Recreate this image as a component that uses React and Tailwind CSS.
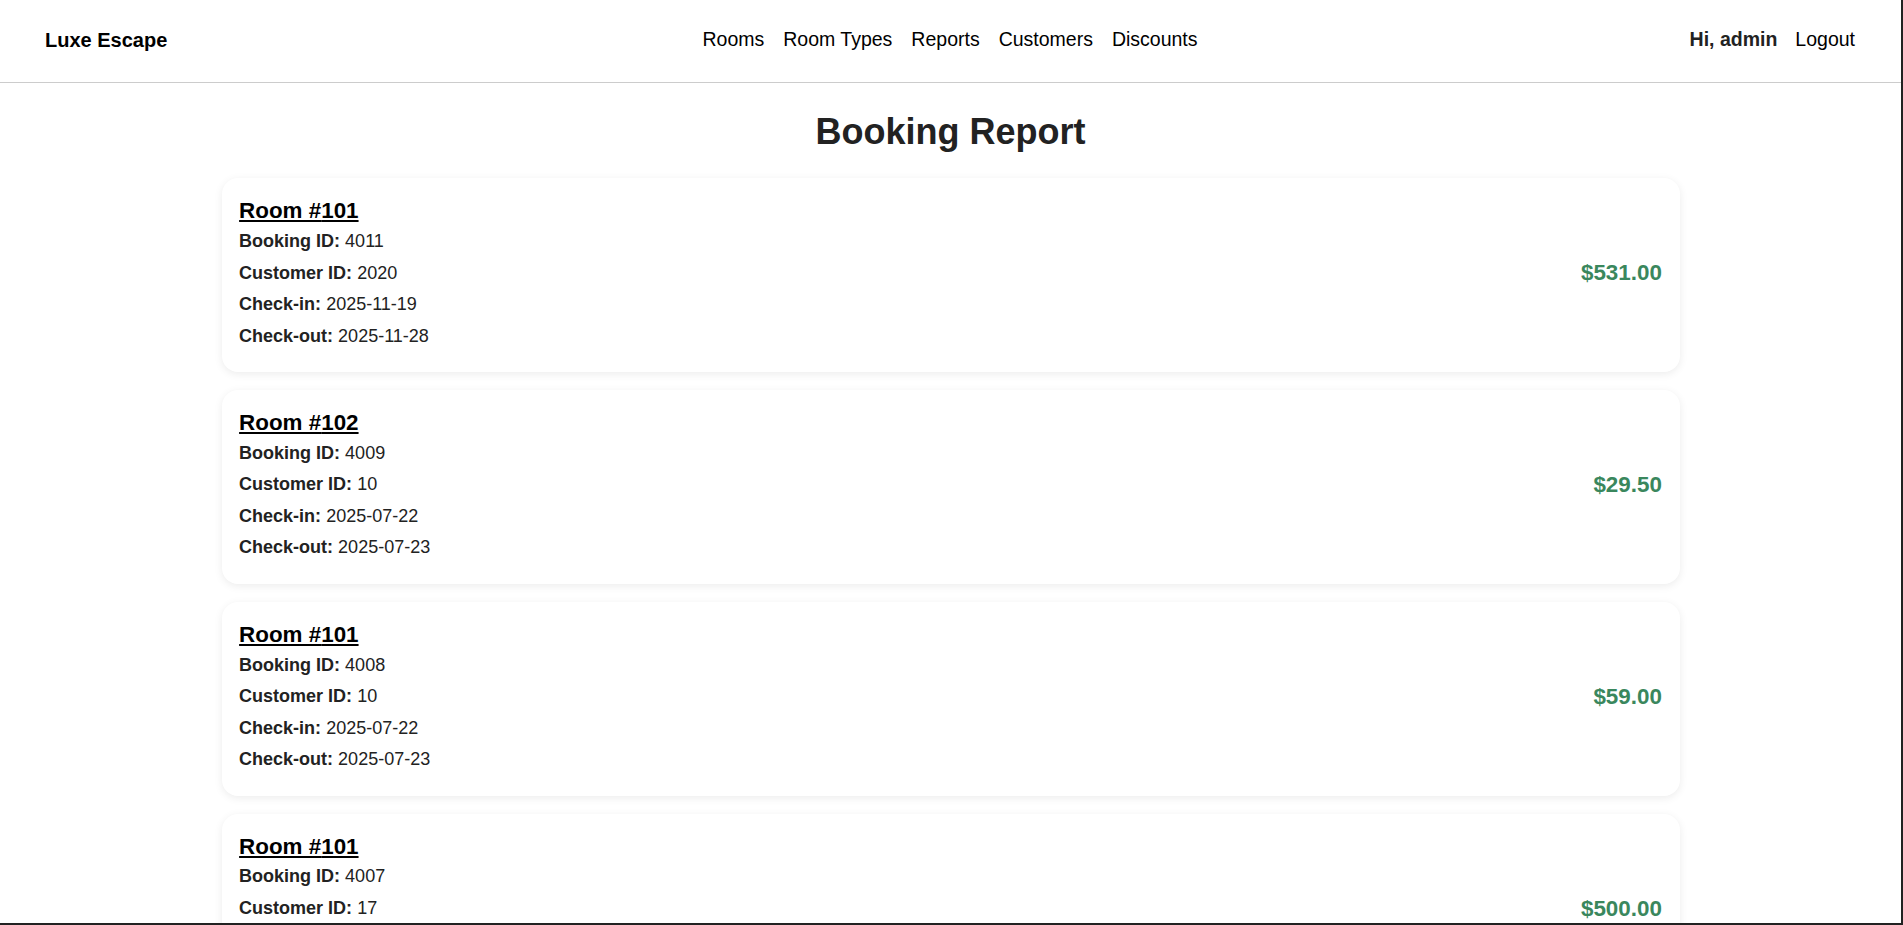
import React from "react";

const bookings = [
  { room: "101", id: "4011", customer: "2020", checkIn: "2025-11-19", checkOut: "2025-11-28", total: "$531.00" },
  { room: "102", id: "4009", customer: "10", checkIn: "2025-07-22", checkOut: "2025-07-23", total: "$29.50" },
  { room: "101", id: "4008", customer: "10", checkIn: "2025-07-22", checkOut: "2025-07-23", total: "$59.00" },
  { room: "101", id: "4007", customer: "17", checkIn: "2025-07-15", checkOut: "2025-07-20", total: "$500.00" },
  { room: "103", id: "4006", customer: "12", checkIn: "2025-07-10", checkOut: "2025-07-12", total: "$120.00" },
];

function Field({ label, value }) {
  return (
    <div className="leading-[31.5px] text-[18px] text-[#222]">
      <span className="font-bold">{label}</span> {value}
    </div>
  );
}

export default function App() {
  return (
    <div
      className="w-full h-[925px] overflow-hidden bg-white border-r-2 border-b-2 border-[#222] box-border"
      style={{ fontFamily: '"Liberation Sans", Arial, sans-serif' }}
    >
      <header className="h-[83px] border-b border-[#cccccc] flex items-center pl-[45px] pr-[46px] pb-[2px]">
        <div className="flex-1 text-[20px] font-bold text-black">Luxe Escape</div>
        <nav className="flex items-center gap-[19px] text-[19.5px] text-black">
          <a>Rooms</a>
          <a>Room Types</a>
          <a>Reports</a>
          <a>Customers</a>
          <a>Discounts</a>
        </nav>
        <div className="flex-1 flex items-center justify-end gap-[18px] text-[19.5px]">
          <span className="font-bold text-[#222]">Hi, admin</span>
          <a className="text-black">Logout</a>
        </div>
      </header>

      <main>
        <h1 className="mt-[28px] mb-[26px] text-center text-[36px] font-bold text-[#222] leading-[1.15]">
          Booking Report
        </h1>
        <div className="flex flex-col gap-[18px]">
          {bookings.map((b) => (
            <div
              key={b.id}
              className="w-[1458px] mx-auto bg-white rounded-[16px] shadow-[0_2px_8px_rgba(0,0,0,0.08)] py-5 px-[17.6px] flex items-center justify-between"
            >
              <div className="flex flex-col">
                <div className="text-[22.4px] font-bold text-black underline leading-[1.15] mb-[2px]">
                  Room #{b.room}
                </div>
                <Field label="Booking ID:" value={b.id} />
                <Field label="Customer ID:" value={b.customer} />
                <Field label="Check-in:" value={b.checkIn} />
                <Field label="Check-out:" value={b.checkOut} />
              </div>
              <div className="text-[22.4px] font-bold text-[#3a875d] pb-[4px]">{b.total}</div>
            </div>
          ))}
        </div>
      </main>
    </div>
  );
}
